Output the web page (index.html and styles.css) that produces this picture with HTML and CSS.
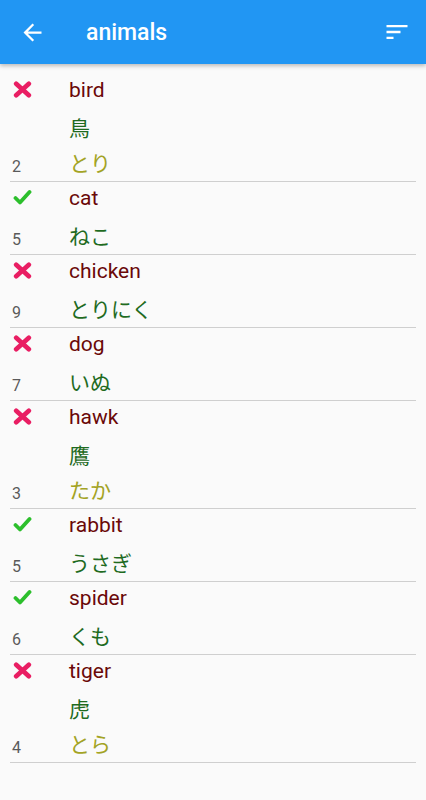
FILE: index.html
```html
<!DOCTYPE html>
<html lang="ja">
<head>
    <meta charset="UTF-8">
    <meta name="viewport" content="width=device-width, initial-scale=1.0">
    <title>animals</title>
    <link rel="stylesheet" href="styles.css">
</head>
<body>
    <div class="appbar">
        <svg class="back" viewBox="0 0 24 24"><path d="M20 11H7.83l5.59-5.59L12 4l-8 8 8 8 1.41-1.41L7.83 13H20v-2z"/></svg>
        <div class="title">animals</div>
        <svg class="sort" viewBox="0 0 24 24"><path d="M3 18h6v-2H3v2zM3 6v2h18V6H3zm0 7h12v-2H3v2z"/></svg>
    </div>

    <div id="list" class="list"></div>

    <script>
        const words = [
            {en:'bird', kanji:'鳥', kana:'とり', n:2, ok:false},
            {en:'cat', kanji:'', kana:'ねこ', n:5, ok:true},
            {en:'chicken', kanji:'', kana:'とりにく', n:9, ok:false},
            {en:'dog', kanji:'', kana:'いぬ', n:7, ok:false},
            {en:'hawk', kanji:'鷹', kana:'たか', n:3, ok:false},
            {en:'rabbit', kanji:'', kana:'うさぎ', n:5, ok:true},
            {en:'spider', kanji:'', kana:'くも', n:6, ok:true},
            {en:'tiger', kanji:'虎', kana:'とら', n:4, ok:false}
        ]

        const cross = '<svg class="mark" viewBox="0 0 18 16"><path d="M3 2.5L15 13.5M15 2.5L3 13.5" stroke="#e91e63" stroke-width="4.4" stroke-linecap="round"/></svg>'
        const check = '<svg class="mark" viewBox="0 0 19 17"><path d="M2.5 9L7 13.5L16.5 3" fill="none" stroke="#2cbf2c" stroke-width="3.8" stroke-linecap="round" stroke-linejoin="round"/></svg>'

        words.forEach(w=>{
            let jp = ''
            if(w.kanji!=''){
                jp = `<div class="kanji">${w.kanji}</div><div class="kana">${w.kana}</div>`
            }else{
                jp = `<div class="kanji">${w.kana}</div>`
            }
            document.getElementById('list').innerHTML+=`
                <div class="row">
                    <div class="side">
                        ${w.ok ? check : cross}
                        <div class="num">${w.n}</div>
                    </div>
                    <div class="content">
                        <div class="word">${w.en}</div>
                        ${jp}
                    </div>
                </div>
            `
        })
    </script>
</body>
</html>
```

FILE: styles.css
```css
body{
    margin: 0;
    background-color: #fafafa;
    font-family: Roboto, "Noto Sans CJK JP", sans-serif;
}
.appbar{
    height: 64px;
    background-color: #2196f3;
    display: flex;
    align-items: center;
    box-shadow: 0 2px 4px rgba(0,0,0,0.25);
    position: relative;
}
.back{
    width: 27px;
    height: 27px;
    margin-left: 19px;
    fill: #fff;
}
.title{
    color: #fff;
    font-size: 23px;
    font-weight: 500;
    margin-left: 40px;
    flex: 1;
}
.sort{
    width: 28px;
    height: 28px;
    margin-right: 15px;
    fill: #fff;
}
.list{
    padding-top: 10px;
}
.row{
    display: flex;
    margin: 0 10px;
    border-bottom: 1px solid #cfcfcf;
}
.side{
    width: 59px;
    display: flex;
    flex-direction: column;
    justify-content: space-between;
}
.mark{
    width: 19px;
    height: 17px;
    margin: 7px 0 0 3px;
}
.num{
    font-size: 16px;
    color: #5a5a5a;
    line-height: 35px;
    padding: 0 0 0 2px;
    margin-bottom: -3px;
}
.content{
    flex: 1;
}
.word{
    font-size: 21px;
    line-height: 32px;
    color: #6a0808;
    margin-bottom: 5px;
}
.kanji, .kana{
    font-family: "Noto Sans CJK JP", sans-serif;
    font-size: 21px;
    line-height: 35px;
    color: #1f6b1f;
    margin-top: -1px;
    margin-bottom: 1px;
}
.kana{
    color: #a3a324;
}
```
